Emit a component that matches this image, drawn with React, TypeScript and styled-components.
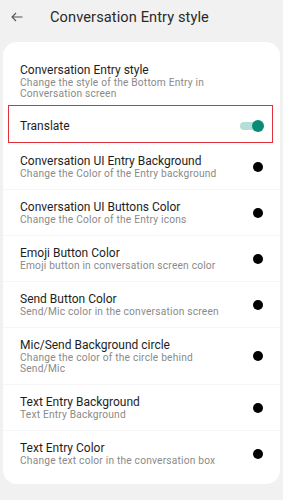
import React from "react";
import styled, { createGlobalStyle } from "styled-components";

const Global = createGlobalStyle`
  html, body { margin: 0; padding: 0; background: #f1f1f1; }
  body { font-family: Roboto, "Noto Sans", "Liberation Sans", sans-serif; -webkit-font-smoothing: antialiased; }
`;

const Page = styled.div`
  width: 283px;
  min-height: 500px;
  background: #f1f1f1;
  display: flex;
  flex-direction: column;
`;

const Header = styled.div`
  height: 42px;
  display: flex;
  align-items: center;
  padding-left: 11px;
  box-sizing: border-box;
  padding-bottom: 8px;
`;

const Back = styled.svg`
  width: 12px;
  height: 10px;
  flex: none;
`;

const HeaderTitle = styled.div`
  margin-left: 27px;
  font-size: 14.6px;
  color: #2a2a2a;
  letter-spacing: 0.1px;
`;

const Card = styled.div`
  margin: 0 3px;
  background: #fff;
  border-radius: 14px;
  padding: 10px 0 8px;
`;

const Row = styled.div<{ $sep?: boolean }>`
  display: flex;
  align-items: center;
  padding: 10px 17px 10px 17px;
  border-top: ${(p) => (p.$sep ? "1px solid #f5f5f5" : "1px solid transparent")};
`;

const Highlight = styled.div`
  margin: 0 7px 0 5px;
  height: 38px;
  box-sizing: border-box;
  border: 1.5px solid #e0313a;
  display: flex;
  align-items: center;
  padding: 3px 9px 0 11px;
`;

const Text = styled.div`
  flex: 1;
  min-width: 0;
`;

const Title = styled.div`
  font-size: 12px;
  line-height: 14px;
  color: #1e1e1e;
`;

const Sub = styled.div`
  font-size: 10.2px;
  line-height: 11px;
  color: #8a8a8a;
  letter-spacing: 0.2px;
  padding-right: 20px;
`;

const Dot = styled.div`
  width: 10px;
  height: 10px;
  border-radius: 50%;
  background: #000;
  flex: none;
`;

const Toggle = styled.div`
  position: relative;
  width: 22px;
  height: 8px;
  border-radius: 4px;
  background: #b3dfd8;
  flex: none;
  margin-right: 1px;
`;

const Knob = styled.div`
  position: absolute;
  right: -2px;
  top: -2px;
  width: 12px;
  height: 12px;
  border-radius: 50%;
  background: #0a8a77;
`;

const items = [
  ["Conversation UI Entry Background", "Change the Color of the Entry background"],
  ["Conversation UI Buttons Color", "Change the Color of the Entry icons"],
  ["Emoji Button Color", "Emoji button in conversation screen color"],
  ["Send Button Color", "Send/Mic color in the conversation screen"],
  ["Mic/Send Background circle", "Change the color of the circle behind Send/Mic"],
  ["Text Entry Background", "Text Entry Background"],
  ["Text Entry Color", "Change text color in the conversation box"],
];

export default function App() {
  return (
    <Page>
      <Global />
      <Header>
        <Back viewBox="0 0 12 10">
          <path d="M11.5 5H1M5 1L1 5l4 4" fill="none" stroke="#555" strokeWidth="1.1" />
        </Back>
        <HeaderTitle>Conversation Entry style</HeaderTitle>
      </Header>
      <Card>
        <Row style={{ paddingBottom: 6 }}>
          <Text>
            <Title>Conversation Entry style</Title>
            <Sub>Change the style of the Bottom Entry in Conversation screen</Sub>
          </Text>
        </Row>
        <Highlight>
          <Text>
            <Title>Translate</Title>
          </Text>
          <Toggle>
            <Knob />
          </Toggle>
        </Highlight>
        {items.map(([t, s], i) => (
          <Row key={t} $sep={i > 0}>
            <Text>
              <Title>{t}</Title>
              <Sub>{s}</Sub>
            </Text>
            <Dot />
          </Row>
        ))}
      </Card>
    </Page>
  );
}
